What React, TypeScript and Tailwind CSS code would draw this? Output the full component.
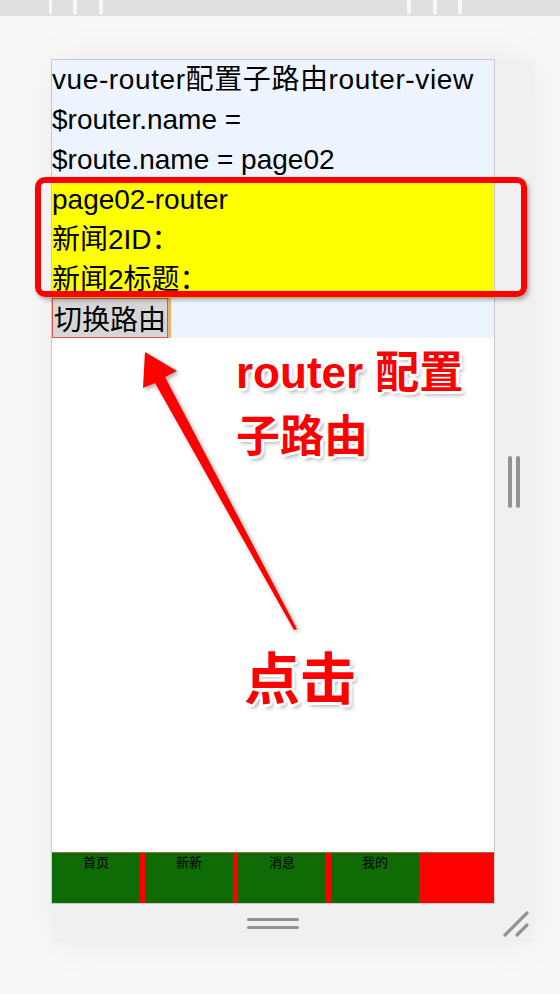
import React from "react";

const tabs = ["首页", "新新", "消息", "我的"];

const outline =
  "[text-shadow:3px_0_0_#fff,-3px_0_0_#fff,0_3px_0_#fff,0_-3px_0_#fff,2px_2px_0_#fff,-2px_-2px_0_#fff,2px_-2px_0_#fff,-2px_2px_0_#fff,3px_4px_4px_rgba(0,0,0,0.35)]";

export default function App() {
  return (
    <div className="relative w-[560px] h-[994px] bg-[#f8f8f8] overflow-hidden font-['Liberation_Sans','Noto_Sans_CJK_SC',sans-serif]">
      {/* top ruler */}
      <div className="h-4 bg-[#e0e0e0] flex items-start">
        <div className="ml-[49px] w-[3px] h-[14px] bg-[#f8f8f8]" />
        <div className="ml-[21px] w-[4px] h-[14px] bg-[#f8f8f8]" />
        <div className="ml-[22px] w-[4px] h-[14px] bg-[#f8f8f8]" />
        <div className="ml-[304px] w-[4px] h-[14px] bg-[#f8f8f8]" />
        <div className="ml-[22px] w-[4px] h-[14px] bg-[#f8f8f8]" />
        <div className="ml-[21px] w-[4px] h-[14px] bg-[#f8f8f8]" />
      </div>

      {/* device */}
      <div className="mt-[44px] ml-[52px] w-[482px] h-[883px] bg-[#f0f0f0] flex shadow-[0_0_40px_rgba(0,0,0,0.06)]">
        <div className="flex flex-col">
          <div className="w-[442px] h-[843px] bg-white outline outline-1 outline-[#c8c8c8] flex flex-col">
            <div className="bg-[#edf4fe] text-[28px] leading-[40px] text-black">
              <div className="tracking-[0.6px]">vue-router配置子路由router-view</div>
              <div>$router.name =</div>
              <div>$route.name = page02</div>
              <div className="bg-[#ffff00] h-[118px]">
                <div>page02-router</div>
                <div>新闻2ID：</div>
                <div>新闻2标题：</div>
              </div>
              <div className="flex">
                <button className="h-[40px] px-0 w-[116px] bg-[#d6d6d6] border border-[#e2564a] text-[28px] leading-[36px] text-black font-['Noto_Sans_CJK_SC',sans-serif]">
                  切换路由
                </button>
                <div className="w-[3px] h-[40px] bg-[#f0b070]" />
              </div>
            </div>
            <div className="flex-1" />
            <div className="h-[51px] bg-[#ff0000] border-t border-[#8a7a40] flex">
              {tabs.map((t, i) => (
                <div
                  key={t}
                  className={
                    "w-[88px] h-full bg-[#0e6b05] text-center text-[13px] leading-[18px] text-black font-['Noto_Sans_CJK_SC',sans-serif] " +
                    (i === 3 ? "" : "mr-[5px]")
                  }
                >
                  {t}
                </div>
              ))}
            </div>
          </div>
          <div className="h-[40px] flex items-center justify-center">
            <div className="flex flex-col gap-[5px]">
              <div className="w-[52px] h-[3px] rounded-full bg-[#939393]" />
              <div className="w-[52px] h-[3px] rounded-full bg-[#939393]" />
            </div>
          </div>
        </div>
        <div className="flex-1 flex flex-col items-center">
          <div className="flex-1 flex items-center gap-[4px]">
            <div className="w-[4px] h-[52px] rounded-full bg-[#939393]" />
            <div className="w-[4px] h-[52px] rounded-full bg-[#939393]" />
          </div>
          <svg width="40" height="40" viewBox="0 0 40 40">
            <line x1="11" y1="32" x2="33" y2="10" stroke="#939393" strokeWidth="3.2" strokeLinecap="round" />
            <line x1="23" y1="32" x2="33" y2="22" stroke="#939393" strokeWidth="3.2" strokeLinecap="round" />
          </svg>
        </div>
      </div>

      {/* annotation: red box */}
      <div className="absolute left-[35px] top-[177px] w-[492px] h-[120px] border-[6px] border-[#ff0000] rounded-[10px] shadow-[2px_3px_4px_rgba(0,0,0,0.3)]" />

      {/* annotation: arrow */}
      <svg className="absolute left-0 top-0 drop-shadow-[2px_2px_2px_rgba(0,0,0,0.35)]" width="560" height="994">
        <polygon
          points="145,352 177,371 165,377 297,629 294,630 155,383 143,388"
          fill="#ff0000"
        />
      </svg>

      <div
        className={
          "absolute left-[236px] top-[341px] text-[44px] leading-[64px] font-bold text-[#ff0000] font-['Liberation_Sans','Noto_Sans_CJK_SC',sans-serif] " +
          outline
        }
      >
        <div>router 配置</div>
        <div>子路由</div>
      </div>
      <div
        className={
          "absolute left-[244px] top-[643px] text-[56px] leading-[64px] font-bold text-[#ff0000] font-['Noto_Sans_CJK_SC',sans-serif] " +
          outline
        }
      >
        点击
      </div>
    </div>
  );
}
